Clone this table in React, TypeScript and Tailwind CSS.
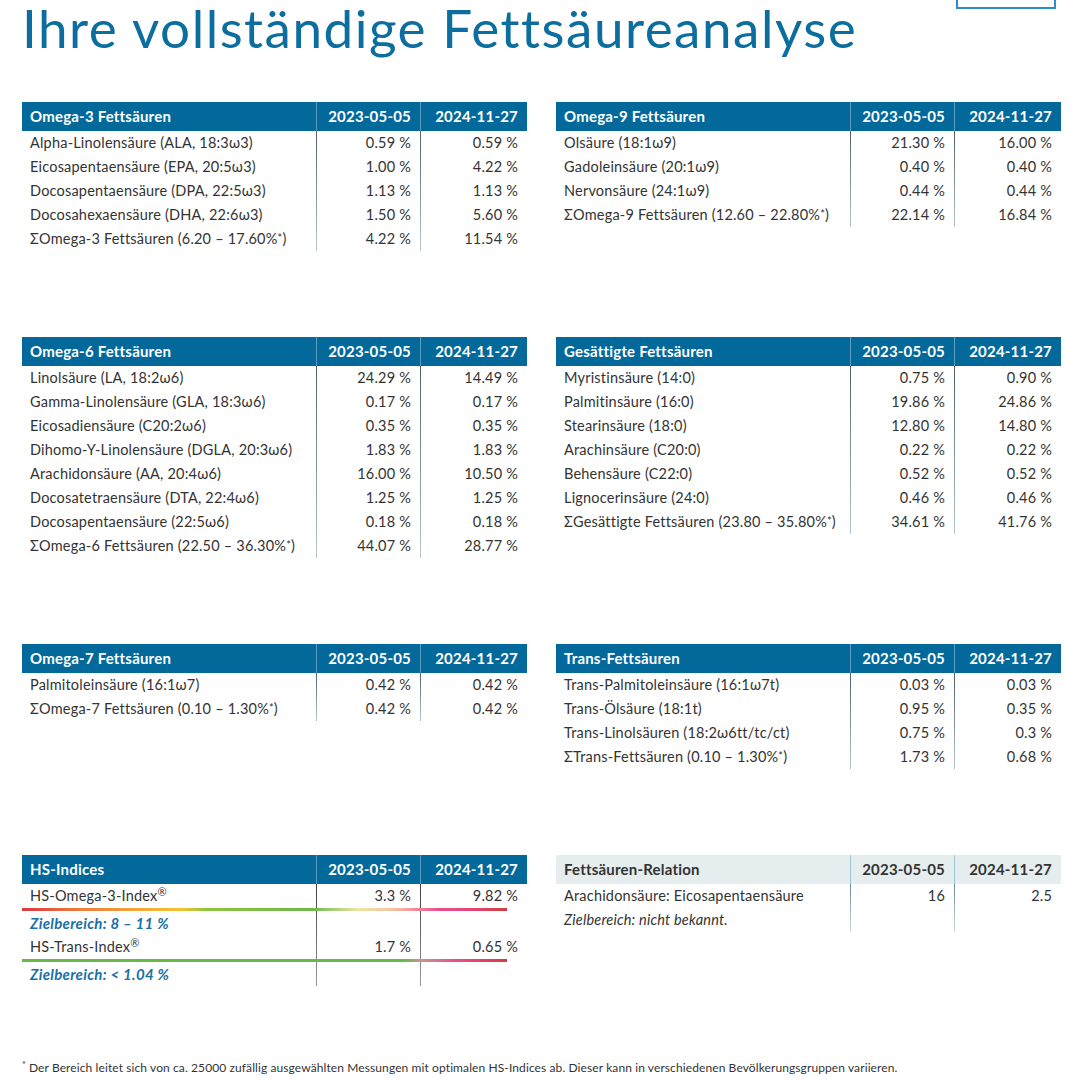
import type { ReactNode } from "react"
import clsx from "clsx"

type Row = { label: ReactNode; a: string; b: string }

const Star = () => <sup className="relative -top-[2px] text-[11px]">*</sup>

const sum = (name: string, range: string): ReactNode => (
  <>
    ΣOmega{name} ({range}%<Star />)
  </>
)

const omega3: Row[] = [
  { label: "Alpha-Linolensäure (ALA, 18:3ω3)", a: "0.59 %", b: "0.59 %" },
  { label: "Eicosapentaensäure (EPA, 20:5ω3)", a: "1.00 %", b: "4.22 %" },
  { label: "Docosapentaensäure (DPA, 22:5ω3)", a: "1.13 %", b: "1.13 %" },
  { label: "Docosahexaensäure (DHA, 22:6ω3)", a: "1.50 %", b: "5.60 %" },
  { label: sum("-3 Fettsäuren", "6.20 – 17.60"), a: "4.22 %", b: "11.54 %" },
]

const omega9: Row[] = [
  { label: "Olsäure (18:1ω9)", a: "21.30 %", b: "16.00 %" },
  { label: "Gadoleinsäure (20:1ω9)", a: "0.40 %", b: "0.40 %" },
  { label: "Nervonsäure (24:1ω9)", a: "0.44 %", b: "0.44 %" },
  { label: sum("-9 Fettsäuren", "12.60 – 22.80"), a: "22.14 %", b: "16.84 %" },
]

const omega6: Row[] = [
  { label: "Linolsäure (LA, 18:2ω6)", a: "24.29 %", b: "14.49 %" },
  { label: "Gamma-Linolensäure (GLA, 18:3ω6)", a: "0.17 %", b: "0.17 %" },
  { label: "Eicosadiensäure (C20:2ω6)", a: "0.35 %", b: "0.35 %" },
  { label: "Dihomo-Y-Linolensäure (DGLA, 20:3ω6)", a: "1.83 %", b: "1.83 %" },
  { label: "Arachidonsäure (AA, 20:4ω6)", a: "16.00 %", b: "10.50 %" },
  { label: "Docosatetraensäure (DTA, 22:4ω6)", a: "1.25 %", b: "1.25 %" },
  { label: "Docosapentaensäure (22:5ω6)", a: "0.18 %", b: "0.18 %" },
  { label: sum("-6 Fettsäuren", "22.50 – 36.30"), a: "44.07 %", b: "28.77 %" },
]

const saturated: Row[] = [
  { label: "Myristinsäure (14:0)", a: "0.75 %", b: "0.90 %" },
  { label: "Palmitinsäure (16:0)", a: "19.86 %", b: "24.86 %" },
  { label: "Stearinsäure (18:0)", a: "12.80 %", b: "14.80 %" },
  { label: "Arachinsäure (C20:0)", a: "0.22 %", b: "0.22 %" },
  { label: "Behensäure (C22:0)", a: "0.52 %", b: "0.52 %" },
  { label: "Lignocerinsäure (24:0)", a: "0.46 %", b: "0.46 %" },
  {
    label: (
      <>
        ΣGesättigte Fettsäuren (23.80 – 35.80%<Star />)
      </>
    ),
    a: "34.61 %",
    b: "41.76 %",
  },
]

const omega7: Row[] = [
  { label: "Palmitoleinsäure (16:1ω7)", a: "0.42 %", b: "0.42 %" },
  { label: sum("-7 Fettsäuren", "0.10 – 1.30"), a: "0.42 %", b: "0.42 %" },
]

const trans: Row[] = [
  { label: "Trans-Palmitoleinsäure (16:1ω7t)", a: "0.03 %", b: "0.03 %" },
  { label: "Trans-Ölsäure (18:1t)", a: "0.95 %", b: "0.35 %" },
  { label: "Trans-Linolsäuren (18:2ω6tt/tc/ct)", a: "0.75 %", b: "0.3 %" },
  {
    label: (
      <>
        ΣTrans-Fettsäuren (0.10 – 1.30%<Star />)
      </>
    ),
    a: "1.73 %",
    b: "0.68 %",
  },
]

const cols = "grid grid-cols-[294px_104px_107px]"
const bodyLines =
  "bg-no-repeat bg-[length:1px_100%,1px_100%] bg-[position:294px_0,398px_0] bg-[linear-gradient(#4f5f6a,#b4c6d0),linear-gradient(#4f5f6a,#b4c6d0)]"

function Header({ title, light }: { title: string; light?: boolean }) {
  return (
    <div
      className={clsx(
        cols,
        "h-[29px] items-center text-[15px] font-bold tracking-[0.2px]",
        light ? "bg-[#e5edee] text-[#333]" : "bg-[#03699b] text-white"
      )}
    >
      <div className="pl-2">{title}</div>
      <div
        className={clsx(
          "flex h-full items-center justify-end border-l pr-[9px]",
          light ? "border-[#9cc6d4]" : "border-[#5d9cc3]"
        )}
      >
        2023-05-05
      </div>
      <div
        className={clsx(
          "flex h-full items-center justify-end border-l pr-[9px]",
          light ? "border-[#9cc6d4]" : "border-[#5d9cc3]"
        )}
      >
        2024-11-27
      </div>
    </div>
  )
}

function RowLine({ row }: { row: Row }) {
  return (
    <div className={clsx(cols, "h-6 items-center")}>
      <div className="whitespace-nowrap pl-2">{row.label}</div>
      <div className="pr-[9px] text-right">{row.a}</div>
      <div className="pr-[9px] text-right">{row.b}</div>
    </div>
  )
}

function Table({ title, rows, light }: { title: string; rows: Row[]; light?: boolean }) {
  return (
    <div className="w-[505px]">
      <Header title={title} light={light} />
      <div className={bodyLines}>
        {rows.map((r, i) => (
          <RowLine key={i} row={r} />
        ))}
      </div>
    </div>
  )
}

function Target({ children }: { children: ReactNode }) {
  return (
    <div className={clsx(cols, "h-6 items-center")}>
      <div className="pl-2 text-[15px] font-bold italic tracking-[0.3px] text-[#1a70a5]">
        {children}
      </div>
    </div>
  )
}

function HsTable() {
  return (
    <div className="w-[505px]">
      <Header title="HS-Indices" />
      <div className="bg-no-repeat bg-[length:1px_100%,1px_100%] bg-[position:294px_0,398px_0] bg-[linear-gradient(#3f3f3f,#9a9a9a),linear-gradient(#3f3f3f,#9a9a9a)]">
        <RowLine
          row={{
            label: (
              <>
                HS-Omega-3-Index<sup className="text-[11px]">®</sup>
              </>
            ),
            a: "3.3 %",
            b: "9.82 %",
          }}
        />
        <div className="h-[3px] w-[485px] bg-[linear-gradient(to_right,#d8383f_0%,#ee7d3f_12%,#f3c431_33%,#8dc43f_38%,#6bb84a_60%,#ece5a6_69%,#f5c0a2_77%,#ea4f8c_86%,#e2456e_93%,#d43a3f_100%)]" />
        <Target>Zielbereich: 8 – 11 %</Target>
        <RowLine
          row={{
            label: (
              <>
                HS-Trans-Index<sup className="text-[11px]">®</sup>
              </>
            ),
            a: "1.7 %",
            b: "0.65 %",
          }}
        />
        <div className="h-[3px] w-[485px] bg-[linear-gradient(to_right,#6bb84a_0%,#6bb84a_79%,#c09a90_82%,#ea4f8c_89%,#e2456e_94%,#d43a3f_100%)]" />
        <Target>Zielbereich: &lt; 1.04 %</Target>
      </div>
    </div>
  )
}

function RelationTable() {
  return (
    <div className="w-[505px]">
      <Header title="Fettsäuren-Relation" light />
      <div className="bg-no-repeat bg-[length:1px_100%,1px_100%] bg-[position:294px_0,398px_0] bg-[linear-gradient(#6b8a99,#d0dde3),linear-gradient(#6b8a99,#d0dde3)]">
        <RowLine row={{ label: "Arachidonsäure: Eicosapentaensäure", a: "16", b: "2.5" }} />
        <div className={clsx(cols, "h-6 items-center")}>
          <div className="pl-2 italic">Zielbereich: nicht bekannt.</div>
        </div>
      </div>
    </div>
  )
}

export default function App() {
  return (
    <div className="h-[1080px] w-[1080px] overflow-hidden bg-white pl-[22px] font-['Lato',sans-serif] text-[14.5px] tracking-[0.2px] text-[#333]">
      <div className="flex items-start justify-between pr-[24px]">
        <h1 className="text-[53px] leading-[56px] tracking-[1.5px] text-[#0b6e9f]">
          Ihre vollständige Fettsäureanalyse
        </h1>
        <div className="h-[9px] w-[100px] border-2 border-t-0 border-[#2b8ec9]" />
      </div>

      <div className="mt-[46px] grid grid-cols-[505px_505px] items-start gap-x-[29px] gap-y-[86px]">
        <Table title="Omega-3 Fettsäuren" rows={omega3} />
        <Table title="Omega-9 Fettsäuren" rows={omega9} />
        <Table title="Omega-6 Fettsäuren" rows={omega6} />
        <Table title="Gesättigte Fettsäuren" rows={saturated} />
        <Table title="Omega-7 Fettsäuren" rows={omega7} />
        <Table title="Trans-Fettsäuren" rows={trans} />
        <HsTable />
        <RelationTable />
      </div>

      <p className="mt-[75px] text-[12px] leading-[14px] tracking-[0.1px]">
        <sup className="mr-[3px] text-[9px]">*</sup>Der Bereich leitet sich von ca. 25000 zufällig
        ausgewählten Messungen mit optimalen HS-Indices ab. Dieser kann in verschiedenen
        Bevölkerungsgruppen variieren.
      </p>
    </div>
  )
}
